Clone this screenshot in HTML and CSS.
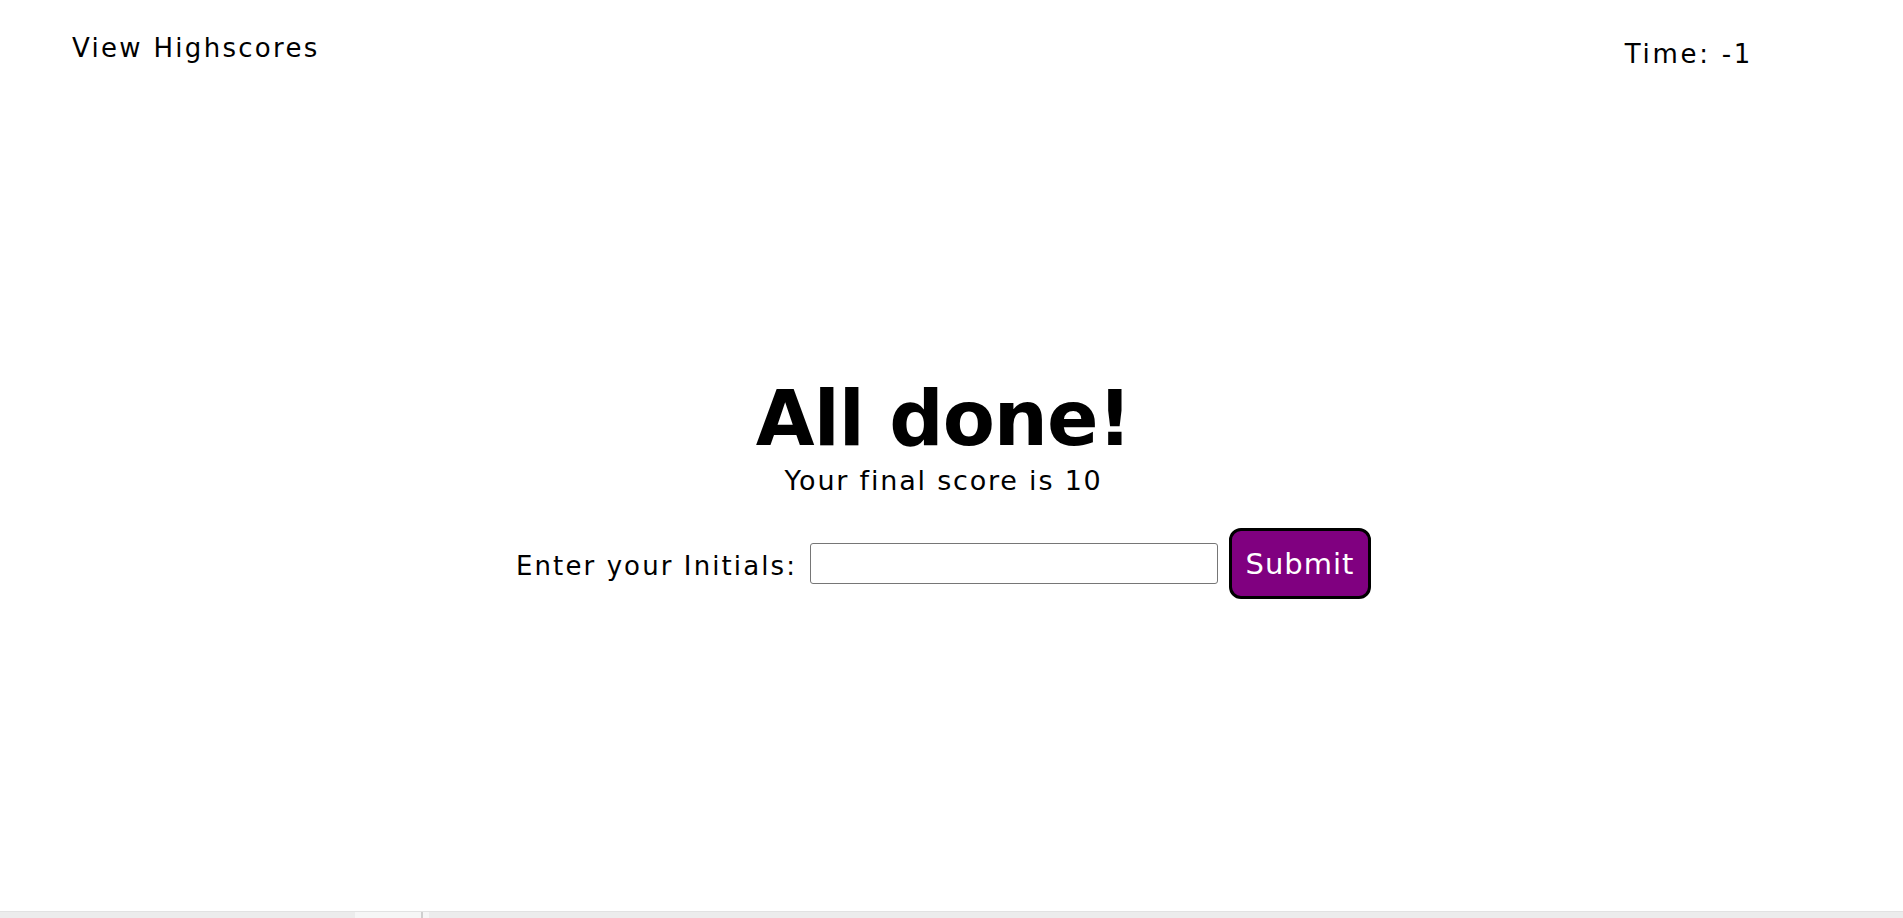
FILE: index.html
```html
<!DOCTYPE html>
<html lang="en">
<head>
<meta charset="utf-8">
<title>Quiz</title>
<link rel="stylesheet" href="styles.css">
</head>
<body>
<div class="page">
  <header class="top">
    <a class="scores-link">View Highscores</a>
    <div class="timer">Time: -1</div>
  </header>
  <main class="done">
    <h1 class="done-title">All done!</h1>
    <p class="done-score">Your final score is 10</p>
    <form class="initials-form">
      <label class="initials-label" for="initials">Enter your Initials:</label>
      <input class="initials-input" id="initials" type="text">
      <button class="submit-btn" type="button">Submit</button>
    </form>
  </main>
  <div class="hscroll">
    <div class="hscroll-track"></div>
    <div class="hscroll-light"></div>
    <div class="hscroll-line"></div>
    <div class="hscroll-light2"></div>
    <div class="hscroll-rest"></div>
  </div>
</div>
</body>
</html>
```

FILE: styles.css
```css
html, body {
  margin: 0;
  padding: 0;
  background: #ffffff;
}
body {
  font-family: "DejaVu Sans", Verdana, sans-serif;
  color: #000;
  overflow: hidden;
}
.page {
  height: 100vh;
  display: flex;
  flex-direction: column;
}
.top {
  display: flex;
  justify-content: space-between;
  align-items: flex-start;
  padding: 33px 150px 0 72px;
  font-size: 26px;
  line-height: 30px;
}
.scores-link {
  color: #000;
  text-decoration: none;
  cursor: pointer;
  letter-spacing: 2.3px;
}
.timer {
  margin-top: 6px;
  letter-spacing: 2.7px;
}
.done {
  flex: 1;
  display: flex;
  flex-direction: column;
  align-items: center;
  padding: 308px 16px 0 0;
}
.done-title {
  margin: 0;
  font-size: 76px;
  line-height: 84px;
  font-weight: bold;
  letter-spacing: -1px;
}
.done-score {
  margin: 4px 0 0;
  font-size: 27px;
  line-height: 32px;
  letter-spacing: 1.8px;
}
.initials-form {
  margin-top: 31px;
  display: flex;
  align-items: center;
}
.initials-label {
  font-size: 26px;
  line-height: 30px;
  letter-spacing: 2.1px;
  margin: 5px 13px 0 0;
}
.initials-input {
  box-sizing: border-box;
  width: 408px;
  height: 41px;
  border: 1px solid #767676;
  border-radius: 3px;
  padding: 0 6px;
  font: inherit;
  font-size: 24px;
  margin: 0 11px 0 0;
}
.submit-btn {
  box-sizing: border-box;
  width: 142px;
  height: 71px;
  background: #800080;
  color: #fff;
  border: 3px solid #000;
  border-radius: 12px;
  font-family: inherit;
  font-size: 29px;
  letter-spacing: 1px;
  padding: 0;
  cursor: pointer;
}
.hscroll {
  height: 6px;
  display: flex;
  background: #ececec;
  border-top: 1px solid #e2e2e2;
}
.hscroll-track {
  width: 355px;
}
.hscroll-light {
  width: 66px;
  background: #f6f6f6;
}
.hscroll-line {
  width: 2px;
  background: #cfcfcf;
}
.hscroll-light2 {
  width: 6px;
  background: #f6f6f6;
}
.hscroll-rest {
  flex: 1;
}
```
